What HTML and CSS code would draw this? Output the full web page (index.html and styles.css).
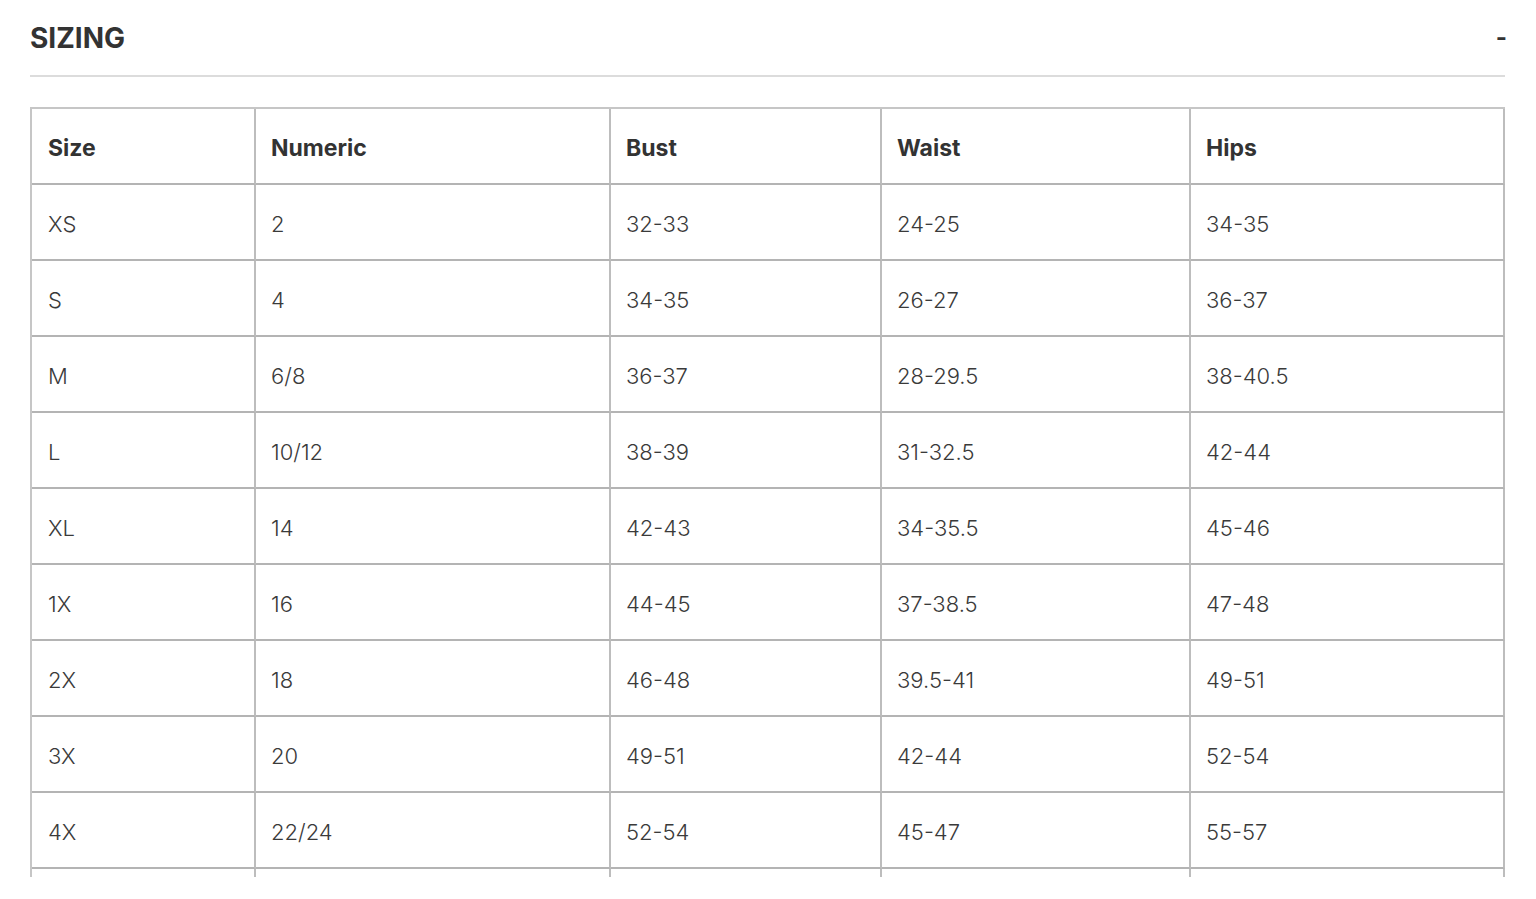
FILE: index.html
```html
<!DOCTYPE html>
<html lang="en">
<head>
<meta charset="utf-8">
<title>Sizing</title>
<link rel="stylesheet" href="styles.css">
</head>
<body>
<div class="page">
  <div class="section-head">
    <h2 class="section-title">SIZING</h2>
    <span class="toggle">-</span>
  </div>
  <div class="table-wrap">
    <table class="size-table">
      <colgroup>
        <col class="c1"><col class="c2"><col class="c3"><col class="c4"><col class="c5">
      </colgroup>
      <thead>
        <tr><th>Size</th><th>Numeric</th><th>Bust</th><th>Waist</th><th>Hips</th></tr>
      </thead>
      <tbody>
        <tr><td>XS</td><td>2</td><td>32-33</td><td>24-25</td><td>34-35</td></tr>
        <tr><td>S</td><td>4</td><td>34-35</td><td>26-27</td><td>36-37</td></tr>
        <tr><td>M</td><td>6/8</td><td>36-37</td><td>28-29.5</td><td>38-40.5</td></tr>
        <tr><td>L</td><td>10/12</td><td>38-39</td><td>31-32.5</td><td>42-44</td></tr>
        <tr><td>XL</td><td>14</td><td>42-43</td><td>34-35.5</td><td>45-46</td></tr>
        <tr><td>1X</td><td>16</td><td>44-45</td><td>37-38.5</td><td>47-48</td></tr>
        <tr><td>2X</td><td>18</td><td>46-48</td><td>39.5-41</td><td>49-51</td></tr>
        <tr><td>3X</td><td>20</td><td>49-51</td><td>42-44</td><td>52-54</td></tr>
        <tr><td>4X</td><td>22/24</td><td>52-54</td><td>45-47</td><td>55-57</td></tr>
        <tr><td></td><td></td><td></td><td></td><td></td></tr>
      </tbody>
    </table>
  </div>
</div>
</body>
</html>
```

FILE: styles.css
```css
html, body {
  margin: 0;
  padding: 0;
  background: #ffffff;
}

body {
  font-family: Inter, "Liberation Sans", sans-serif;
  color: #333333;
}

.page {
  padding: 0 31px 0 30px;
}

.section-head {
  display: flex;
  align-items: center;
  justify-content: space-between;
  height: 77px;
  box-sizing: border-box;
  border-bottom: 2px solid #dcdcdc;
}

.section-title {
  margin: 0;
  font-size: 28px;
  font-weight: 700;
  line-height: 1;
  color: #333333;
  letter-spacing: 0;
}

.toggle {
  font-size: 24px;
  font-weight: 700;
  line-height: 1;
  color: #333333;
  margin-right: -2px;
}

.table-wrap {
  margin-top: 30px;
  height: 770px;
  overflow: hidden;
}

.size-table {
  width: 1475px;
  table-layout: fixed;
  border-collapse: separate;
  border-spacing: 0;
  border-top: 2px solid #c6c6c6;
  border-left: 2px solid #c6c6c6;
}

.c1 { width: 224px; }
.c2 { width: 355px; }
.c3 { width: 271px; }
.c4 { width: 309px; }
.c5 { width: 314px; }

.size-table th,
.size-table td {
  height: 76px;
  box-sizing: border-box;
  padding: 3px 15px 0;
  border-right: 2px solid #bdbdbd;
  border-bottom: 2px solid #b4b4b4;
  text-align: left;
  vertical-align: middle;
  font-size: 22px;
  color: #333333;
}

.size-table th:first-child,
.size-table td:first-child {
  padding-left: 16px;
}

.size-table th {
  font-size: 23px;
  font-weight: 700;
}

.size-table td {
  font-weight: 300;
  color: #3a3a3a;
}
```
